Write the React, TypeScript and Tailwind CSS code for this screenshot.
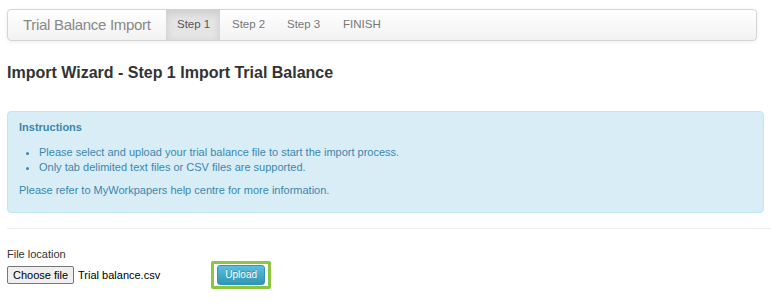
const App = () => {
  return (
    <div className="min-h-[303px] bg-white px-[7px] pt-[9px] font-['Liberation_Sans',Arial,sans-serif] text-[13px] text-[#333]">
      <nav className="mr-[7px] flex h-[32px] items-stretch rounded-[4px] border border-[#d4d4d4] bg-gradient-to-b from-white to-[#f2f2f2] shadow-[0_1px_4px_rgba(0,0,0,0.065)]">
        <span className="flex w-[158px] items-center pl-[15px] text-[15px] tracking-[-0.3px] text-[#888]">Trial Balance Import</span>
        <a className="flex w-[54px] items-center bg-[#e5e5e5] pl-[11px] text-[11.5px] text-[#555] shadow-[inset_0_3px_8px_rgba(0,0,0,0.125)]">Step 1</a>
        <a className="flex w-[56px] items-center pl-[12px] text-[11.5px] text-[#777]">Step 2</a>
        <a className="flex w-[56px] items-center pl-[11px] text-[11.5px] text-[#777]">Step 3</a>
        <a className="flex items-center pl-[11px] text-[11.5px] text-[#777]">FINISH</a>
      </nav>

      <h2 className="mt-[22px] text-[16px] font-bold leading-[20px] text-[#333]">Import Wizard - Step 1 Import Trial Balance</h2>

      <div className="mt-[28px] rounded-[4px] border border-[#bce8f1] bg-[#d9edf7] px-[11px] pb-[14px] pt-[7px] text-[11px] text-[#3a87ad]">
        <h4 className="text-[11px] font-bold leading-[16px]">Instructions</h4>
        <ul className="mt-[10px] list-disc pl-[20px] leading-[15px]">
          <li>Please select and upload your trial balance file to start the import process.</li>
          <li>Only tab delimited text files or CSV files are supported.</li>
        </ul>
        <p className="mt-[8px] leading-[15px]">Please refer to MyWorkpapers help centre for more information.</p>
      </div>

      <hr className="mt-[15px] -mr-[7px] border-t border-[#eee]" />

      <div className="mt-[18px] text-[11px] leading-[15px] text-[#333]">File location</div>
      <div className="-mt-[1px] flex items-center">
        <button className="h-[18px] rounded-[2px] border border-[#767676] bg-[#efefef] px-[5px] text-[11px] leading-[16px] text-black">Choose file</button>
        <span className="ml-[4px] text-[11px] text-black">Trial balance.csv</span>
        <div className="ml-[51px] rounded-[2px] border-[3px] border-[#8cc63f] px-[3px] py-[1px]">
          <button className="block h-[20px] w-[48px] rounded-[3px] border border-[#2f96b4] bg-gradient-to-b from-[#5bc0de] to-[#2f96b4] text-[10px] leading-[18px] text-white [text-shadow:0_-1px_0_rgba(0,0,0,0.25)]">Upload</button>
        </div>
      </div>
    </div>
  );
};

export default App;
